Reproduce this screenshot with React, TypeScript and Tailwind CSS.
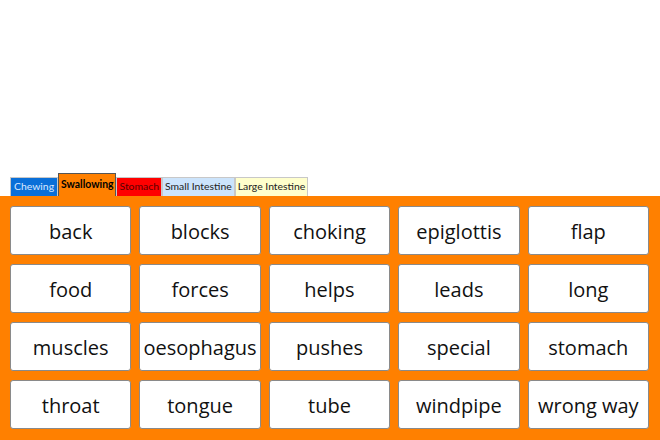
import React from "react";

const words = [
  "back", "blocks", "choking", "epiglottis", "flap",
  "food", "forces", "helps", "leads", "long",
  "muscles", "oesophagus", "pushes", "special", "stomach",
  "throat", "tongue", "tube", "windpipe", "wrong way",
];

const App = () => {
  return (
    <div className="w-[660px] h-[440px] overflow-hidden bg-white flex flex-col">
      <div className="h-[173px]" />

      {/* tabs */}
      <div className="flex items-end pl-[10px] h-[23px] text-[10.4px] font-['Lato',sans-serif]">
        <div className="h-[19px] px-[3px] flex items-center bg-[#0a6fd8] text-[#dbe9ff] border border-[#c8c8c8] border-b-0">
          Chewing
        </div>
        <div className="h-[23px] px-[2px] flex items-center bg-[#ff8000] text-black font-bold border border-[#555] border-b-0">
          Swallowing
        </div>
        <div className="h-[19px] px-[2px] flex items-center bg-[#ff0000] text-[#5a0000] border border-[#c8c8c8] border-b-0">
          Stomach
        </div>
        <div className="h-[19px] px-[2px] flex items-center bg-[#cce4fc] text-[#222] border border-[#c8c8c8] border-b-0">
          Small Intestine
        </div>
        <div className="h-[19px] px-[2px] flex items-center bg-[#ffffcc] text-[#222] border border-[#c8c8c8] border-b-0">
          Large Intestine
        </div>
      </div>

      {/* word cards */}
      <div className="flex-1 bg-[#ff8000] pt-[10px] pl-[10px] pr-[11px]">
        <div className="grid grid-cols-5 gap-x-2 gap-y-[9px]">
          {words.map((w) => (
            <div
              key={w}
              className="h-[49px] pt-[2px] bg-white border border-[#8a8a8a] rounded-[3px] flex items-center justify-center text-[20px] text-[#111] font-['Open_Sans',sans-serif] whitespace-nowrap"
            >
              {w}
            </div>
          ))}
        </div>
      </div>
    </div>
  );
};

export default App;
